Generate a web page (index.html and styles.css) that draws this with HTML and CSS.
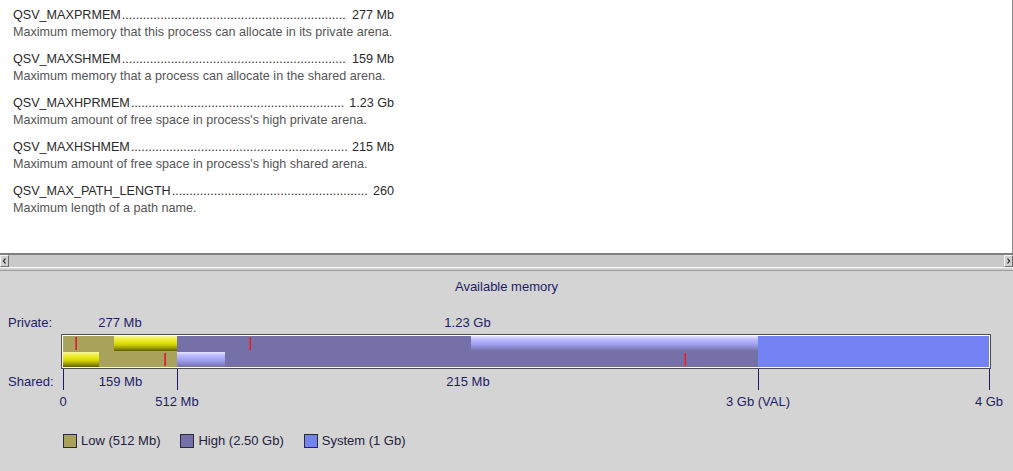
FILE: index.html
```html
<!DOCTYPE html>
<html lang="en">
<head>
    <meta charset="UTF-8">
    <title>Available memory</title>
    <link rel="stylesheet" href="styles.css">
</head>
<body>
    <div class="list">
        <div class="item">
            <div class="entry"><span class="name">QSV_MAXPRMEM </span><span class="dots"></span><span class="value">277 Mb</span></div>
            <div class="desc">Maximum memory that this process can allocate in its private arena.</div>
        </div>
        <div class="item">
            <div class="entry"><span class="name">QSV_MAXSHMEM</span><span class="dots"></span><span class="value">159 Mb</span></div>
            <div class="desc">Maximum memory that a process can allocate in the shared arena.</div>
        </div>
        <div class="item">
            <div class="entry"><span class="name">QSV_MAXHPRMEM</span><span class="dots"></span><span class="value">1.23 Gb</span></div>
            <div class="desc">Maximum amount of free space in process's high private arena.</div>
        </div>
        <div class="item">
            <div class="entry"><span class="name">QSV_MAXHSHMEM</span><span class="dots"></span><span class="value">215 Mb</span></div>
            <div class="desc">Maximum amount of free space in process's high shared arena.</div>
        </div>
        <div class="item">
            <div class="entry"><span class="name">QSV_MAX_PATH_LENGTH</span><span class="dots"></span><span class="value">260</span></div>
            <div class="desc">Maximum length of a path name.</div>
        </div>
    </div>

    <div class="hscroll">
        <div class="sbtn">
            <svg width="7" height="10" viewBox="0 0 7 10"><polyline points="4.5,2.5 2.5,5 4.5,7.5" fill="none" stroke="#1a1a1a" stroke-width="1.2"/></svg>
        </div>
        <div class="track"></div>
        <div class="sbtn">
            <svg width="7" height="10" viewBox="0 0 7 10"><polyline points="2.5,2.5 4.5,5 2.5,7.5" fill="none" stroke="#1a1a1a" stroke-width="1.2"/></svg>
        </div>
    </div>
    <div class="sep"></div>

    <div class="panel">
        <div class="title">Available memory</div>

        <div class="scale-row label-row">
            <span class="side">Private:</span>
            <span class="mid">277 Mb</span>
            <span class="mid">1.23 Gb</span>
            <span></span>
        </div>

        <div class="bar">
            <div class="track-inner">
                <div class="region low"></div>
                <div class="region high"></div>
                <div class="region system"></div>

                <div class="seg yellow top" style="left: 51px; width: 63px;"></div>
                <div class="seg yellow bottom" style="left: 0; width: 36px;"></div>
                <div class="seg lavender top" style="left: 408px; width: 287px;"></div>
                <div class="seg lavender bottom" style="left: 114px; width: 48px;"></div>

                <div class="mark top" style="left: 12px;"></div>
                <div class="mark top" style="left: 186px;"></div>
                <div class="mark bottom" style="left: 101px;"></div>
                <div class="mark bottom" style="left: 621px;"></div>
            </div>
        </div>

        <div class="scale-row tick-row">
            <span class="side">Shared:</span>
            <span class="mid tick">159 Mb</span>
            <span class="mid tick">215 Mb</span>
            <span class="mid tick last"></span>
        </div>

        <div class="axis">
            <span style="left: 63px;">0</span>
            <span style="left: 177px;">512 Mb</span>
            <span style="left: 758px;">3 Gb (VAL)</span>
            <span style="left: 989px;">4 Gb</span>
        </div>

        <div class="legend">
            <div class="key"><span class="swatch low"></span>Low (512 Mb)</div>
            <div class="key"><span class="swatch high"></span>High (2.50 Gb)</div>
            <div class="key"><span class="swatch system"></span>System (1 Gb)</div>
        </div>
    </div>
</body>
</html>
```

FILE: styles.css
```css
body {
    margin: 0;
    padding: 0;
    font-family: "Liberation Sans", Arial, sans-serif;
    font-size: 13px;
    background: #d4d4d4;
    overflow: hidden;
}
.list {
    height: 253px;
    box-sizing: border-box;
    background: #ffffff;
    border-right: 1px solid #8a8a8a;
    padding: 7px 0 0 13px;
    font-size: 12.6px;
}
.item {
    width: 381px;
    margin-bottom: 10px;
}
.entry {
    display: flex;
    line-height: 17px;
    color: #2a2a2a;
    white-space: nowrap;
}
.dots {
    flex: 1;
    overflow: hidden;
    margin: 0 5px 0 1px;
}
.dots::before {
    content: "........................................................................................................................";
}
.desc {
    line-height: 17px;
    color: #555555;
    white-space: nowrap;
}
.hscroll {
    display: flex;
    height: 12px;
    border-top: 2px solid #7f7f7f;
    border-bottom: 1px solid #ffffff;
    background: #c9c9c9;
}
.hscroll .track {
    flex: 1;
}
.sbtn {
    display: flex;
    align-items: center;
    justify-content: center;
    width: 9px;
    height: 12px;
    background: #cfcfcf;
    border-top: 1px solid #f4f4f4;
    border-left: 1px solid #f4f4f4;
    border-right: 1px solid #6e6e6e;
    border-bottom: 1px solid #6e6e6e;
    box-sizing: border-box;
}
.sep {
    height: 2px;
    background: #d0d0d0;
    border-bottom: 1px solid #9a9a9a;
}
.panel {
    padding-top: 8px;
    color: #1c1c66;
}
.title {
    text-align: center;
    line-height: 16px;
    margin-bottom: 20px;
}
.scale-row {
    display: grid;
    grid-template-columns: 63px 114px 581px 232px;
}
.side {
    padding-left: 8px;
}
.mid {
    text-align: center;
}
.label-row {
    line-height: 16px;
    margin-bottom: 3px;
}
.bar {
    margin-left: 61px;
    width: 930px;
    box-sizing: border-box;
    border: 1px solid #4e4e4e;
    padding: 1px;
    background: #ffffff;
}
.track-inner {
    position: relative;
    display: flex;
    height: 31px;
}
.region.low { width: 114px; background: #a9a25a; }
.region.high { width: 581px; background: #7571a8; }
.region.system { width: 231px; background: #7383f3; }
.seg {
    position: absolute;
}
.seg.top { top: 0; height: 15px; }
.seg.bottom { top: 16px; height: 15px; }
.seg.yellow {
    background: linear-gradient(180deg, #f4f4a0 0%, #eeee30 25%, #d8d800 55%, #9a9a00 80%, #5e5e00 100%);
}
.seg.lavender {
    background: linear-gradient(180deg, #e4e4ff 0%, #b8b8fb 25%, #a0a0f0 55%, #8886cc 80%, #74729e 100%);
}
.mark {
    position: absolute;
    width: 2px;
    height: 13px;
    background: linear-gradient(90deg, #e04858, #c81828);
}
.mark.top { top: 1px; }
.mark.bottom { top: 17px; }
.tick-row {
    height: 19px;
    line-height: 16px;
}
.tick-row .side {
    padding-top: 5px;
}
.tick {
    border-left: 1px solid #1c1c66;
    padding-top: 5px;
}
.tick.last {
    border-right: 1px solid #1c1c66;
}
.axis {
    position: relative;
    height: 16px;
    line-height: 16px;
    margin-top: 6px;
}
.axis span {
    position: absolute;
    top: 0;
    transform: translateX(-50%);
    white-space: nowrap;
}
.legend {
    display: flex;
    gap: 20px;
    margin: 23px 0 0 63px;
    line-height: 16px;
    color: #22223e;
}
.key {
    display: flex;
    align-items: center;
}
.swatch {
    width: 12px;
    height: 12px;
    border: 1px solid #2a2a3a;
    margin-right: 4px;
}
.swatch.low { background: #a9a25a; }
.swatch.high { background: #7571a8; }
.swatch.system { background: #7383f3; }
```
